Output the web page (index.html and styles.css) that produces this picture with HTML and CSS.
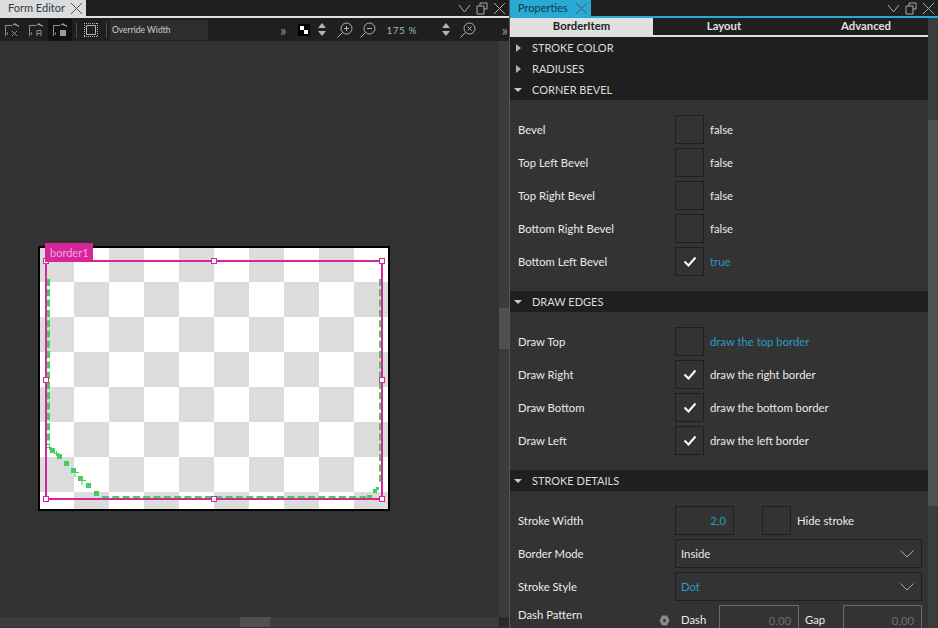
FILE: index.html
```html
<!DOCTYPE html>
<html lang="en">
<head>
  <meta charset="UTF-8">
  <title>Form Editor</title>
  <link rel="stylesheet" href="styles.css">
</head>
<body>
  <div class="editor">
    <div class="tabbar">
      <div class="tab"><span>Form Editor</span>
        <svg class="tab-x" width="13" height="13" viewBox="0 0 13 13"><path d="M1 1l11 11M12 1L1 12"/></svg>
      </div>
      <div class="win-btns">
        <svg width="13" height="13" viewBox="0 0 13 13"><path d="M1 3l5.5 7L12 3"/></svg>
        <svg width="12" height="13" viewBox="0 0 12 13"><path d="M4 4V1h7v6H8M1 4h7v8H1z"/></svg>
        <svg width="13" height="13" viewBox="0 0 13 13"><path d="M1 1l11 11M12 1L1 12"/></svg>
      </div>
    </div>
    <div class="toolbar">
      <div class="tool">
        <svg width="14" height="14" viewBox="0 0 14 14"><path d="M.5 13V2.500h7M10.500 2.500h3V4"/><path class="fill" d="M10 0l2.500 2h-5zM3 9v3L1.500 10.500z"/><path d="M7 8l5 5M12 8l-5 5"/></svg>
      </div>
      <div class="tool">
        <svg width="14" height="14" viewBox="0 0 14 14"><path d="M.5 13V2.500h7M10.500 2.500h3V4"/><path class="fill" d="M10 0l2.500 2h-5zM3 9v3L1.500 10.500z"/><path d="M8 13V7.500h4V13M8 10.500h4"/></svg>
      </div>
      <div class="tool tool-on">
        <svg width="14" height="14" viewBox="0 0 14 14"><path d="M.5 13V2.500h7M10.500 2.500h3V4"/><path class="fill" d="M10 0l2.500 2h-5zM3 9v3L1.500 10.500zM7 7h6v6H7z"/></svg>
      </div>
      <span class="sep"></span>
      <div class="tool-plain">
        <svg width="14" height="14" viewBox="0 0 14 14"><path d="M2.500 2.500h9v9h-9z"/><path stroke-dasharray="1 1" d="M0 .5h14M0 13.500h14M.5 0v14M13.500 0v14"/></svg>
      </div>
      <span class="sep"></span>
      <div class="width-field">Override Width</div>
      <span class="more more-first">»</span>
      <span class="swatch"></span>
      <svg class="updown" width="8" height="13" viewBox="0 0 8 13"><path class="fill" d="M4 0l4 5H0zM4 13L0 8h8z"/></svg>
      <svg class="zoom-ic zoom-in" width="16" height="16" viewBox="0 0 16 16"><circle cx="9.500" cy="6.500" r="5.500"/><path d="M5.500 10.500L.5 15.500M7 6.500h5M9.500 4v5"/></svg>
      <svg class="zoom-ic zoom-out" width="16" height="16" viewBox="0 0 16 16"><circle cx="9.500" cy="6.500" r="5.500"/><path d="M5.500 10.500L.5 15.500M7 6.500h5"/></svg>
      <span class="zoom-val">175 %</span>
      <svg class="updown updown-2" width="8" height="13" viewBox="0 0 8 13"><path class="fill" d="M4 0l4 5H0zM4 13L0 8h8z"/></svg>
      <svg class="zoom-ic zoom-fit" width="16" height="16" viewBox="0 0 16 16"><circle cx="9.500" cy="6.500" r="5.500"/><path d="M5.500 10.500L.5 15.500M7.500 4.500l4 4M11.500 4.500l-4 4"/></svg>
      <span class="more more-last">»</span>
    </div>
    <div class="workspace">
      <div class="view">
        <div class="stage">
          <div class="checker"></div>
          <svg class="stroke" width="352" height="265" viewBox="0 0 352 265">
            <path class="edge edge-left" d="M10.500 33V199"/>
            <path class="edge" d="M64 251H328"/>
            <path class="edge" d="M342 33V237"/>
            <g class="dots">
              <rect x="12" y="202" width="5" height="5"/><rect x="19" y="208" width="5" height="5"/>
              <rect x="26" y="215" width="5" height="5"/><rect x="33" y="222" width="5" height="5"/>
              <rect x="40" y="230" width="5" height="5"/><rect x="48" y="237" width="5" height="5"/>
              <rect x="56" y="245" width="5" height="5"/><rect x="329" y="249" width="5" height="3"/>
              <rect x="335" y="243" width="4" height="4"/><rect x="338" y="241" width="3" height="3"/>
            </g>
            <path class="ticks" d="M9 201.500h5M11.500 199v5M16 207.500h5M18.500 205v5M34 226.500h7M37 224v7M41 234.500h7M44 232v7"/>
          </svg>
          <div class="selection">
            <span class="grip g-tl"></span><span class="grip g-tm"></span><span class="grip g-tr"></span>
            <span class="grip g-ml"></span><span class="grip g-mr"></span>
            <span class="grip g-bl"></span><span class="grip g-bm"></span><span class="grip g-br"></span>
          </div>
          <div class="sel-label">border1</div>
        </div>
      </div>
      <div class="vscroll"><span class="thumb-v"></span></div>
    </div>
    <div class="hscroll-row">
      <div class="hscroll"><span class="thumb-h"></span></div>
      <div class="corner"></div>
    </div>
  </div>

  <div class="props">
    <div class="tabbar tabbar-blue">
      <div class="tab tab-blue"><span>Properties</span>
        <svg class="tab-x" width="13" height="13" viewBox="0 0 13 13"><path d="M1 1l11 11M12 1L1 12"/></svg>
      </div>
      <div class="win-btns">
        <svg width="13" height="13" viewBox="0 0 13 13"><path d="M1 3l5.500 7L12 3"/></svg>
        <svg width="12" height="13" viewBox="0 0 12 13"><path d="M4 4V1h7v6H8M1 4h7v8H1z"/></svg>
        <svg width="13" height="13" viewBox="0 0 13 13"><path d="M1 1l11 11M12 1L1 12"/></svg>
      </div>
    </div>
    <div class="props-main">
      <div class="prop-list">
        <div class="prop-tabs">
          <div class="prop-tab active">BorderItem</div>
          <div class="prop-tab">Layout</div>
          <div class="prop-tab prop-tab-last">Advanced</div>
        </div>

        <div class="sec-head"><i class="arrow-r"></i>STROKE COLOR</div>
        <div class="sec-head"><i class="arrow-r"></i>RADIUSES</div>
        <div class="sec-head"><i class="arrow-d"></i>CORNER BEVEL</div>
        <div class="sec-body">
          <div class="row"><span class="lbl">Bevel</span><span class="check"></span><span class="val">false</span></div>
          <div class="row"><span class="lbl">Top Left Bevel</span><span class="check"></span><span class="val">false</span></div>
          <div class="row"><span class="lbl">Top Right Bevel</span><span class="check"></span><span class="val">false</span></div>
          <div class="row"><span class="lbl">Bottom Right Bevel</span><span class="check"></span><span class="val">false</span></div>
          <div class="row"><span class="lbl">Bottom Left Bevel</span>
            <span class="check"><svg width="14" height="11" viewBox="0 0 14 11"><path d="M1.500 5.500L5.500 9.500L12.500 1.500"/></svg></span>
            <span class="val blue">true</span></div>
        </div>

        <div class="sec-head"><i class="arrow-d"></i>DRAW EDGES</div>
        <div class="sec-body">
          <div class="row"><span class="lbl">Draw Top</span><span class="check"></span><span class="val blue">draw the top border</span></div>
          <div class="row"><span class="lbl">Draw Right</span>
            <span class="check"><svg width="14" height="11" viewBox="0 0 14 11"><path d="M1.500 5.500L5.500 9.500L12.500 1.500"/></svg></span>
            <span class="val">draw the right border</span></div>
          <div class="row"><span class="lbl">Draw Bottom</span>
            <span class="check"><svg width="14" height="11" viewBox="0 0 14 11"><path d="M1.500 5.500L5.500 9.500L12.500 1.500"/></svg></span>
            <span class="val">draw the bottom border</span></div>
          <div class="row"><span class="lbl">Draw Left</span>
            <span class="check"><svg width="14" height="11" viewBox="0 0 14 11"><path d="M1.500 5.500L5.500 9.500L12.500 1.500"/></svg></span>
            <span class="val">draw the left border</span></div>
        </div>

        <div class="sec-head"><i class="arrow-d"></i>STROKE DETAILS</div>
        <div class="sec-body">
          <div class="row"><span class="lbl">Stroke Width</span><span class="num-input">2,0</span><span class="check check-hide"></span><span class="val">Hide stroke</span></div>
          <div class="row"><span class="lbl">Border Mode</span>
            <div class="combo">Inside<svg width="14" height="8" viewBox="0 0 14 8"><path d="M.5 .5L7 7L13.500 .5"/></svg></div></div>
          <div class="row"><span class="lbl">Stroke Style</span>
            <div class="combo blue">Dot<svg width="14" height="8" viewBox="0 0 14 8"><path d="M.5 .5L7 7L13.500 .5"/></svg></div></div>
          <div class="row row-dash">
            <span class="lbl lbl-top">Dash Pattern</span>
            <svg class="hex" width="11" height="11" viewBox="0 0 11 11"><path d="M3 .5h5L10.500 5.500L8 10.500H3L.5 5.500z"/><circle cx="5.500" cy="5.500" r="1.500"/></svg>
            <span class="dash-lbl">Dash</span>
            <span class="dash-field">0,00</span>
            <span class="dash-lbl dash-lbl-gap">Gap</span>
            <span class="dash-field dash-field-last">0,00</span>
          </div>
        </div>
      </div>
      <div class="prop-scroll"><span class="thumb-p"></span></div>
    </div>
  </div>
</body>
</html>
```

FILE: styles.css
```css
html, body {
  margin: 0;
  padding: 0;
}
body {
  width: 938px;
  height: 628px;
  overflow: hidden;
  display: flex;
  background-color: #333;
  color: #eaeaea;
  font-family: Lato, "Noto Sans", sans-serif;
  font-size: 11.300px;
}
svg path, svg circle {
  fill: none;
  stroke: #b4b4b4;
  stroke-width: 1;
}
svg .fill {
  fill: #b4b4b4;
  stroke: none;
}

/* left panel */
.editor {
  width: 509px;
  flex: none;
  display: flex;
  flex-direction: column;
  border-right: 1px solid #565656;
}
.tabbar {
  height: 16px;
  flex: none;
  display: flex;
  justify-content: space-between;
  background-color: #1f1f1f;
  border-bottom: 2px solid #e0e0e0;
}
.tab {
  width: 75px;
  height: 16px;
  padding: 0 3px 0 8px;
  display: flex;
  align-items: center;
  justify-content: space-between;
  background-color: #dcdcdc;
  color: #2d3b4a;
  font-size: 11px;
  line-height: 14px;
  white-space: nowrap;
}
.tab-x path {
  stroke: #555;
}
.win-btns {
  display: flex;
  align-items: center;
  gap: 5px;
  padding-right: 3px;
}
.win-btns svg path {
  stroke: #aaa;
}
.toolbar {
  height: 23px;
  flex: none;
  display: flex;
  align-items: center;
  background-color: #1f1f1f;
}
.tool {
  width: 24px;
  height: 22px;
  display: flex;
  align-items: center;
  justify-content: center;
}
.tool svg path {
  stroke: #8e8e8e;
}
.tool svg .fill {
  fill: #9a9a9a;
  stroke: none;
}
.tool-on {
  background-color: #111;
}
.sep {
  width: 1px;
  height: 16px;
  background-color: #4d4d4d;
  margin: 0 3px 0 4px;
}
.tool-plain {
  width: 22px;
  display: flex;
  justify-content: center;
}
.width-field {
  width: 96px;
  height: 20px;
  padding-left: 2px;
  line-height: 21px;
  background-color: #2d2d2d;
  font-size: 8.500px;
  color: #c4d2dc;
}
.more {
  color: #9a9a9a;
  font-size: 15px;
}
.more-first {
  margin-left: 72px;
}
.swatch {
  width: 12px;
  height: 12px;
  margin-left: 12px;
  background-color: #000;
  background-image: linear-gradient(#fff, #fff), linear-gradient(#fff, #fff);
  background-size: 4px 4px;
  background-position: 2px 2px, 6px 6px;
  background-repeat: no-repeat;
}
.updown {
  margin-left: 8px;
}
.zoom-in {
  margin-left: 11px;
}
.zoom-out {
  margin-left: 7px;
}
.zoom-val {
  margin-left: 10px;
  width: 52px;
  font-size: 10px;
  color: #9db6c8;
  letter-spacing: .5px;
}
.updown-2 {
  margin-left: 4px;
}
.zoom-fit {
  margin-left: 10px;
}
.more-last {
  margin-left: 25px;
}
.workspace {
  flex: 1;
  min-height: 0;
  display: flex;
}
.view {
  flex: 1;
  position: relative;
  background-color: #323232;
}
.vscroll {
  width: 10px;
  flex: none;
  background-color: #3c3c3c;
  padding-top: 267px;
  box-sizing: border-box;
}
.thumb-v {
  display: block;
  height: 41px;
  background-color: #505050;
}
.hscroll-row {
  height: 10px;
  flex: none;
  display: flex;
  margin-bottom: 1px;
}
.hscroll {
  flex: 1;
  padding-left: 240px;
  background-color: #3c3c3c;
}
.thumb-h {
  display: block;
  width: 30px;
  height: 10px;
  background-color: #505050;
}
.corner {
  width: 9px;
  background-color: #2b2b2b;
  border-left: 1px solid #222;
}

/* design canvas */
.stage {
  position: absolute;
  left: 38px;
  top: 205px;
  width: 352px;
  height: 265px;
  box-sizing: border-box;
  border: 2px solid #000;
}
.checker {
  width: 100%;
  height: 100%;
  background-image: conic-gradient(#fff 25%, #dcdcdc 0 50%, #fff 0 75%, #dcdcdc 0);
  background-size: 70px 70px;
  background-position: -1px -1px;
}
.stroke {
  position: absolute;
  left: -2px;
  top: -2px;
}
.stroke .edge {
  stroke: #43cf5e;
  stroke-width: 2;
  stroke-dasharray: 7 3.300;
}
.stroke .edge-left {
  stroke-width: 3;
}
.stroke .ticks {
  stroke: #43cf5e;
}
.dots rect {
  fill: #43cf5e;
}
.selection {
  position: absolute;
  left: 5px;
  top: 12px;
  width: 334px;
  height: 236px;
  border: 2px solid #d6269a;
}
.grip {
  position: absolute;
  width: 4px;
  height: 4px;
  background-color: #fff;
  border: 1px solid #d6269a;
}
.g-tl, .g-ml, .g-bl { left: -4px; }
.g-tm, .g-bm { left: 164px; }
.g-tr, .g-mr, .g-br { right: -4px; }
.g-tl, .g-tm, .g-tr { top: -4px; }
.g-ml, .g-mr { top: 115px; }
.g-bl, .g-bm, .g-br { bottom: -4px; }
.sel-label {
  position: absolute;
  left: 5px;
  top: -5px;
  width: 43px;
  height: 19px;
  padding-left: 5px;
  line-height: 19px;
  font-size: 11px;
  background-color: #d6269a;
  color: #f0a8d8;
}

/* right panel */
.props {
  flex: 1;
  min-width: 0;
  display: flex;
  flex-direction: column;
}
.tabbar-blue {
  border-bottom-color: #27aad3;
}
.tab-blue {
  background-color: #27aad3;
  color: #16384a;
  width: 70px;
}
.props-main {
  flex: 1;
  min-height: 0;
  display: flex;
}
.prop-list {
  flex: 1;
  min-width: 0;
}
.prop-scroll {
  width: 10px;
  flex: none;
  background-color: #3c3c3c;
  padding-top: 102px;
  box-sizing: border-box;
}
.thumb-p {
  display: block;
  height: 386px;
  background-color: #505050;
}
.prop-tabs {
  display: grid;
  grid-template-columns: 143px 142px 133px;
  height: 17px;
  background-color: #1f1f1f;
  border-bottom: 2px solid #e0e0e0;
}
.prop-tab {
  text-align: center;
  font-weight: 700;
  line-height: 16px;
  color: #e0e0e0;
}
.prop-tab.active {
  background-color: #e0e0e0;
  color: #1f1f1f;
}
.prop-tab-last {
  padding-left: 9px;
}
.sec-head {
  height: 21px;
  padding-left: 22px;
  position: relative;
  line-height: 21px;
  font-size: 11px;
  background-color: #1f1f1f;
  color: #dcdcdc;
}
.arrow-r, .arrow-d {
  position: absolute;
  width: 0;
  height: 0;
  border-style: solid;
  border-color: transparent;
}
.arrow-r {
  left: 6px;
  top: 7px;
  border-width: 4px 0 4px 5px;
  border-left-color: #b4b4b4;
}
.arrow-d {
  left: 4px;
  top: 9px;
  border-width: 4px 4.500px 0;
  border-top-color: #c8c8c8;
}
.sec-body {
  padding: 15px 6px 15px 8px;
  display: flex;
  flex-direction: column;
  gap: 4px;
}
.row {
  height: 29px;
  display: flex;
  align-items: center;
}
.lbl {
  width: 157px;
  flex: none;
}
.check {
  width: 27px;
  height: 27px;
  flex: none;
  border: 1px solid #1f1f1f;
  display: flex;
  align-items: center;
  justify-content: center;
}
.check svg path {
  stroke: #fff;
  stroke-width: 2;
}
.check-hide {
  margin-left: 28px;
}
.val {
  margin-left: 6px;
}
.blue {
  color: #2a9cc4;
}
.num-input {
  width: 50px;
  height: 27px;
  padding-right: 7px;
  flex: none;
  line-height: 27px;
  text-align: right;
  color: #2a9cc4;
  border: 1px solid #1f1f1f;
}
.combo {
  flex: 1;
  height: 27px;
  padding: 0 7px 0 5px;
  display: flex;
  align-items: center;
  justify-content: space-between;
  border: 1px solid #1f1f1f;
}
.combo svg path {
  stroke: #aaa;
}
.row-dash {
  align-items: flex-start;
}
.lbl-top {
  width: 141px;
  line-height: 20px;
}
.hex {
  margin-top: 10px;
  flex: none;
}
.hex path {
  fill: #8a8a8a;
  stroke: none;
}
.hex circle {
  fill: #333;
  stroke: none;
}
.dash-lbl {
  width: 38px;
  margin-left: 11px;
  flex: none;
  line-height: 30px;
}
.dash-lbl-gap {
  margin-left: 6px;
}
.dash-field {
  width: 71px;
  height: 30px;
  padding-right: 7px;
  flex: none;
  text-align: right;
  line-height: 30px;
  color: #6f6f6f;
  border: 1px solid #6a6a6a;
  border-bottom: none;
}
.dash-field-last {
  width: 70px;
}
```
